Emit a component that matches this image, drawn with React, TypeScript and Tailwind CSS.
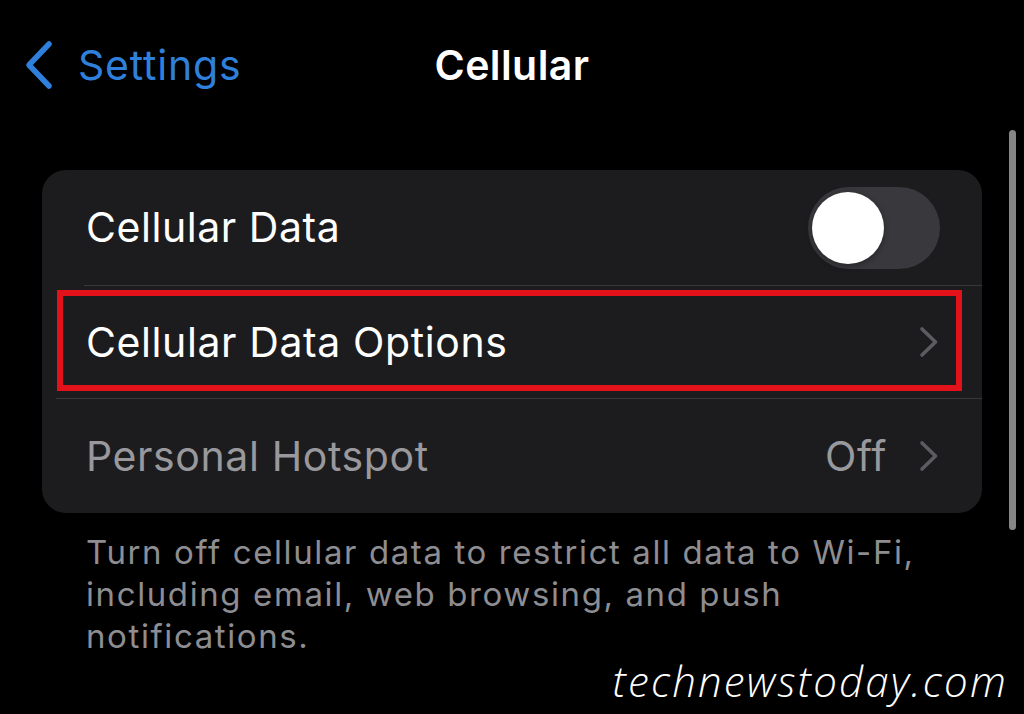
import React from "react";

const font = { fontFamily: "Inter, 'Noto Sans', sans-serif" };

function Chevron({ className = "" }: { className?: string }) {
  return (
    <svg width="20" height="32" viewBox="0 0 20 32" fill="none" className={className}>
      <path d="M3 3 L16.5 16 L3 29" stroke="#5c5c60" strokeWidth="3.6" strokeLinecap="round" strokeLinejoin="round" />
    </svg>
  );
}

function Toggle() {
  return (
    <div className="flex h-[82px] w-[132px] items-center rounded-full bg-[#39393d] px-[4px]">
      <div className="h-[72px] w-[72px] rounded-full bg-white shadow-[0_2px_6px_rgba(0,0,0,0.35)]" />
    </div>
  );
}

export default function App() {
  return (
    <div className="relative h-[714px] w-[1024px] overflow-hidden bg-black text-white" style={font}>
      {/* nav bar */}
      <div className="grid h-[130px] grid-cols-[1fr_auto_1fr] items-center">
        <div className="flex items-center gap-[24px] pl-[24px] text-[#2f80dd]">
          <svg width="30" height="50" viewBox="0 0 30 50" fill="none">
            <path d="M25 4 L5 25 L25 46" stroke="#2f80dd" strokeWidth="5.5" strokeLinecap="round" strokeLinejoin="round" />
          </svg>
          <span className="text-[41px] leading-none tracking-[0.8px]">Settings</span>
        </div>
        <div className="text-[41px] font-semibold leading-none tracking-[0.4px]">Cellular</div>
        <div />
      </div>

      {/* grouped list */}
      <div className="mx-[42px] mt-[40px] overflow-hidden rounded-[24px] bg-[#1c1c1e]">
        <div className="flex h-[115px] items-center justify-between pl-[44px] pr-[42px]">
          <span className="text-[41px] leading-none tracking-[0.55px]">Cellular Data</span>
          <Toggle />
        </div>
        <div className="ml-[42px] h-px bg-[#38383a]" />
        <div className="relative flex h-[112px] items-center justify-between pl-[44px] pr-[43px]">
          <span className="text-[41px] leading-none tracking-[0.6px]">Cellular Data Options</span>
          <Chevron />
          <div className="pointer-events-none absolute bottom-[7px] left-[15px] right-[20px] top-[4px] border-[6px] border-[#e3121a]" />
        </div>
        <div className="ml-[14px] h-px bg-[#38383a]" />
        <div className="flex h-[114px] items-center justify-between pl-[44px] pr-[43px]">
          <span className="text-[41px] leading-none tracking-[0.6px] text-[#98989d]">Personal Hotspot</span>
          <div className="flex items-center gap-[32px]">
            <span className="text-[41px] leading-none tracking-[0.6px] text-[#98989d]">Off</span>
            <Chevron />
          </div>
        </div>
      </div>

      <div className="mt-[18px] flex flex-col pl-[86px] text-[33px] leading-[42px] tracking-[1.6px] text-[#8d8d92]">
        <span className="whitespace-nowrap">
          Turn off cellular data to restrict all data to Wi-Fi<span className="inline-block">,</span>
        </span>
        <span className="whitespace-nowrap">including email, web browsing, and push</span>
        <span className="whitespace-nowrap">notifications.</span>
      </div>

      {/* scroll indicator */}
      <div className="absolute right-[8px] top-[130px] h-[400px] w-[7px] rounded-full bg-[#858585]" />

      {/* watermark */}
      <div
        className="absolute bottom-[12px] right-[16px] text-[42px] italic leading-none tracking-[2.2px] text-white"
        style={{ fontFamily: "'Open Sans', 'Noto Sans', sans-serif", fontWeight: 300 }}
      >
        technewstoday.com
      </div>
    </div>
  );
}
